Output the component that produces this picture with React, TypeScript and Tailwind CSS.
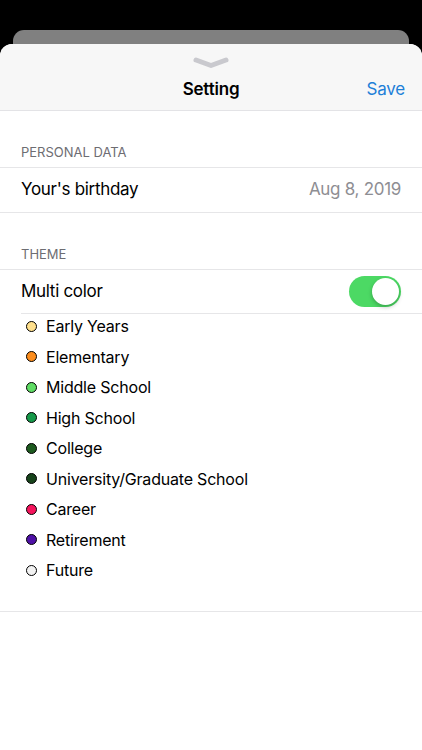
const stages = [
  { name: "Early Years", color: "bg-[#ffe08c]" },
  { name: "Elementary", color: "bg-[#fb8c1c]" },
  { name: "Middle School", color: "bg-[#5fdc64]" },
  { name: "High School", color: "bg-[#16994a]" },
  { name: "College", color: "bg-[#1d5a1f]" },
  { name: "University/Graduate School", color: "bg-[#17431b]" },
  { name: "Career", color: "bg-[#f5145c]" },
  { name: "Retirement", color: "bg-[#4e10a6]" },
  { name: "Future", color: "bg-[#f2f2f2]" },
]

const App = () => {
  return (
    <div className="w-[422px] h-[750px] bg-black overflow-hidden font-['Inter','Liberation_Sans',sans-serif]">
      <div className="pt-[30px]">
        <div className="mx-[13px] h-[20px] bg-[#808080] rounded-t-[11px]" />
        <div className="-mt-[6px] bg-white rounded-t-[12px] h-[706px] overflow-hidden">
          {/* header */}
          <div className="h-[67px] bg-[#f7f7f7] border-b border-[#e3e3e6] relative">
            <div className="flex justify-center pt-[11px]">
              <svg width="40" height="16" viewBox="0 0 40 16">
                <path d="M5 5 L20 10.5 L35 5" fill="none" stroke="#c9c9ce" strokeWidth="5" strokeLinecap="round" strokeLinejoin="round" />
              </svg>
            </div>
            <div className="absolute left-0 right-0 top-[33px] text-center text-[17px] font-semibold text-black leading-[24px] tracking-[-0.2px]">Setting</div>
            <div className="absolute right-[17px] top-[33px] text-[17px] text-[#1e7fd8] leading-[24px] tracking-[-0.2px]">Save</div>
          </div>

          {/* personal data */}
          <div className="pt-[33px] px-[21px] pb-[7px] text-[13px] text-[#6d6d72] leading-[16px]">PERSONAL DATA</div>
          <div className="h-[46px] border-y border-[#e6e6e8] flex items-center justify-between px-[21px] tracking-[-0.3px]">
            <span className="text-[17px] text-black">Your's birthday</span>
            <span className="text-[17px] text-[#8e8e93]">Aug 8, 2019</span>
          </div>

          {/* theme */}
          <div className="pt-[33px] px-[21px] pb-[7px] text-[13px] text-[#6d6d72] leading-[16px]">THEME</div>
          <div className="border-t border-[#e6e6e8]">
            <div className="ml-[21px] h-[44px] border-b border-[#e6e6e8] flex items-center justify-between pr-[21px]">
              <span className="text-[17px] text-black tracking-[-0.3px]">Multi color</span>
              <div className="w-[52px] h-[31px] rounded-full bg-[#4cd964] relative">
                <div className="absolute right-[2px] top-[2px] w-[27px] h-[27px] rounded-full bg-white shadow-[0_2px_4px_rgba(0,0,0,0.25)]" />
              </div>
            </div>
            <div className="-mt-[3px] pb-[25px]">
              {stages.map((s, i) => (
                <div key={i} className="h-[30.5px] flex items-center pl-[26px]">
                  <span className={"w-[11px] h-[11px] rounded-full border border-black " + s.color} />
                  <span className="ml-[9px] text-[16px] text-black tracking-[-0.2px]">{s.name}</span>
                </div>
              ))}
            </div>
          </div>
          <div className="border-t border-[#e6e6e8]" />
        </div>
      </div>
    </div>
  )
}

export default App
